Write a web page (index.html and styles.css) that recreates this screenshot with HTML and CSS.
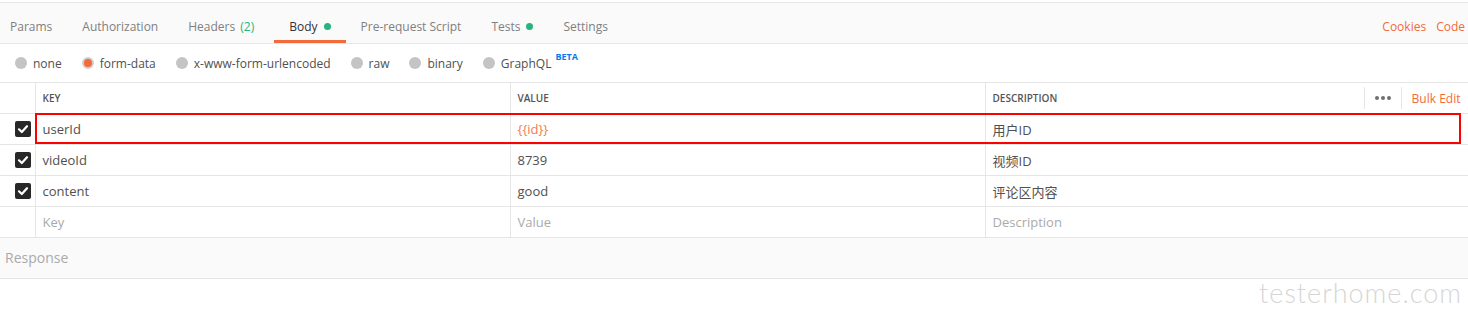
FILE: index.html
```html
<!DOCTYPE html>
<html lang="zh">
<head>
    <meta charset="UTF-8">
    <meta name="viewport" content="width=device-width, initial-scale=1.0">
    <title>Body - form-data</title>
    <link rel="stylesheet" href="styles.css">
</head>
<body>
    <div class="tabs">
        <div class="tab first">Params</div>
        <div class="tab">Authorization</div>
        <div class="tab">Headers&nbsp;<span class="count">(2)</span></div>
        <div class="tab active">Body<span class="dot"></span></div>
        <div class="tab">Pre-request Script</div>
        <div class="tab">Tests<span class="dot"></span></div>
        <div class="tab">Settings</div>
        <div class="tab-links">
            <span>Cookies</span>
            <span>Code</span>
        </div>
    </div>

    <div class="types">
        <label class="type"><span class="radio"></span>none</label>
        <label class="type"><span class="radio on"></span>form-data</label>
        <label class="type"><span class="radio"></span>x-www-form-urlencoded</label>
        <label class="type"><span class="radio"></span>raw</label>
        <label class="type"><span class="radio"></span>binary</label>
        <label class="type"><span class="radio"></span>GraphQL<sup class="beta">BETA</sup></label>
    </div>

    <div class="grid">
        <table class="kv">
            <colgroup>
                <col class="c-check">
                <col class="c-key">
                <col class="c-value">
                <col class="c-desc">
            </colgroup>
            <tr class="head">
                <td></td>
                <td>Key</td>
                <td>Value</td>
                <td>
                    <div class="desc-head">
                        <span>Description</span>
                        <span class="more"><i></i><i></i><i></i></span>
                        <span class="bulk">Bulk Edit</span>
                    </div>
                </td>
            </tr>
            <tr>
                <td class="check"><span class="cb"><svg width="16" height="16" viewBox="0 0 16 16"><path d="M4 8.3 L6.8 11 L12 5.2" fill="none" stroke="#fff" stroke-width="2.2" stroke-linecap="round" stroke-linejoin="round"/></svg></span></td>
                <td>userId</td>
                <td class="var">{{id}}</td>
                <td>用户ID</td>
            </tr>
            <tr>
                <td class="check"><span class="cb"><svg width="16" height="16" viewBox="0 0 16 16"><path d="M4 8.3 L6.8 11 L12 5.2" fill="none" stroke="#fff" stroke-width="2.2" stroke-linecap="round" stroke-linejoin="round"/></svg></span></td>
                <td>videoId</td>
                <td>8739</td>
                <td>视频ID</td>
            </tr>
            <tr>
                <td class="check"><span class="cb"><svg width="16" height="16" viewBox="0 0 16 16"><path d="M4 8.3 L6.8 11 L12 5.2" fill="none" stroke="#fff" stroke-width="2.2" stroke-linecap="round" stroke-linejoin="round"/></svg></span></td>
                <td>content</td>
                <td>good</td>
                <td>评论区内容</td>
            </tr>
            <tr class="empty">
                <td></td>
                <td>Key</td>
                <td>Value</td>
                <td>Description</td>
            </tr>
        </table>
        <!-- red annotation box around the first row -->
        <div class="mark"></div>
    </div>

    <div class="response">Response</div>

    <div class="watermark">testerhome.com</div>
</body>
</html>
```

FILE: styles.css
```css
*{
    margin: 0;
    padding: 0;
    box-sizing: border-box;
}
body{
    width: 1468px;
    height: 326px;
    overflow: hidden;
    background: #fff;
    font-family: "Open Sans", "Noto Sans CJK SC", sans-serif;
    font-size: 13px;
    color: #505050;
}

/* request tabs */
.tabs{
    display: flex;
    height: 42px;
    margin-top: 2px;
    background: #fafafa;
    border-top: 1px solid #e6e6e6;
    border-bottom: 1px solid #e6e6e6;
    font-size: 12px;
}
.tabs .tab{
    display: flex;
    align-items: center;
    padding: 6px 15px 0;
    color: #808080;
}
.tabs .tab.first{
    padding-left: 10px;
}
.tabs .tab.active{
    color: #333;
    box-shadow: inset 0 -3px 0 #f26b3a;
}
.tabs .count{
    margin: 0 5px 0 2px;
    color: #26b47f;
}
.tabs .dot{
    width: 7px;
    height: 7px;
    margin-left: 6px;
    border-radius: 50%;
    background: #26b47f;
}
.tabs .tab-links{
    display: flex;
    align-items: center;
    gap: 10px;
    margin-left: auto;
    padding: 6px 3px 0 0;
    color: #f26b3a;
}

/* body type radios */
.types{
    display: flex;
    align-items: center;
    height: 38px;
    padding-left: 15px;
    gap: 20px;
    font-size: 12px;
}
.types .type{
    display: flex;
    align-items: center;
    color: #505050;
}
.types .radio{
    width: 12px;
    height: 12px;
    margin-right: 6px;
    border-radius: 50%;
    background: #c4c4c4;
}
.types .radio.on{
    background: #f26b3a;
    border: 2px solid #cfcfcf;
}
.types .beta{
    align-self: flex-start;
    margin-left: 4px;
    margin-top: -5px;
    font-size: 9px;
    font-weight: 700;
    color: #097bed;
}

/* key / value table */
.grid{
    position: relative;
}
.kv{
    width: 1468px;
    border-collapse: collapse;
    table-layout: fixed;
}
.kv .c-check{ width: 35px; }
.kv .c-key{ width: 475px; }
.kv .c-value{ width: 475px; }
.kv .c-desc{ width: 483px; }
.kv tr{
    height: 31px;
}
.kv td{
    padding: 0 7px;
    border: 1px solid #e6e6e6;
    white-space: nowrap;
}
.kv td:first-child{
    border-left: none;
}
.kv .head td{
    font-size: 10px;
    font-weight: 600;
    color: #555;
    text-transform: uppercase;
}
.kv .desc-head{
    display: flex;
    align-items: center;
}
.kv .desc-head .more{
    display: flex;
    align-items: center;
    gap: 2px;
    height: 22px;
    margin-left: auto;
    padding: 0 10px;
    border-left: 1px solid #e6e6e6;
    border-right: 1px solid #e6e6e6;
}
.kv .desc-head .more i{
    width: 4px;
    height: 4px;
    border-radius: 50%;
    background: #707070;
}
.kv .desc-head .bulk{
    padding: 0 0 0 10px;
    font-size: 12px;
    font-weight: 400;
    text-transform: none;
    color: #f26b3a;
}
.kv td.check{
    padding: 0 0 0 15px;
}
.kv .cb{
    display: flex;
    width: 16px;
    height: 16px;
    border-radius: 2px;
    background: #282828;
}
.kv .var{
    color: #f47c4c;
}
.kv .empty td{
    color: #aaa;
}
.grid .mark{
    position: absolute;
    left: 35px;
    top: 31px;
    width: 1426px;
    height: 31px;
    border: 2px solid #f00;
}

/* response bar */
.response{
    height: 41px;
    line-height: 40px;
    padding-left: 5px;
    background: #fafafa;
    border-bottom: 1px solid #e6e6e6;
    font-size: 14px;
    color: #aaa;
}

.watermark{
    padding-right: 6px;
    text-align: right;
    font-family: Lato, sans-serif;
    font-weight: 300;
    font-size: 27px;
    letter-spacing: 1px;
    line-height: 28px;
    color: #d6d6d6;
}
```
